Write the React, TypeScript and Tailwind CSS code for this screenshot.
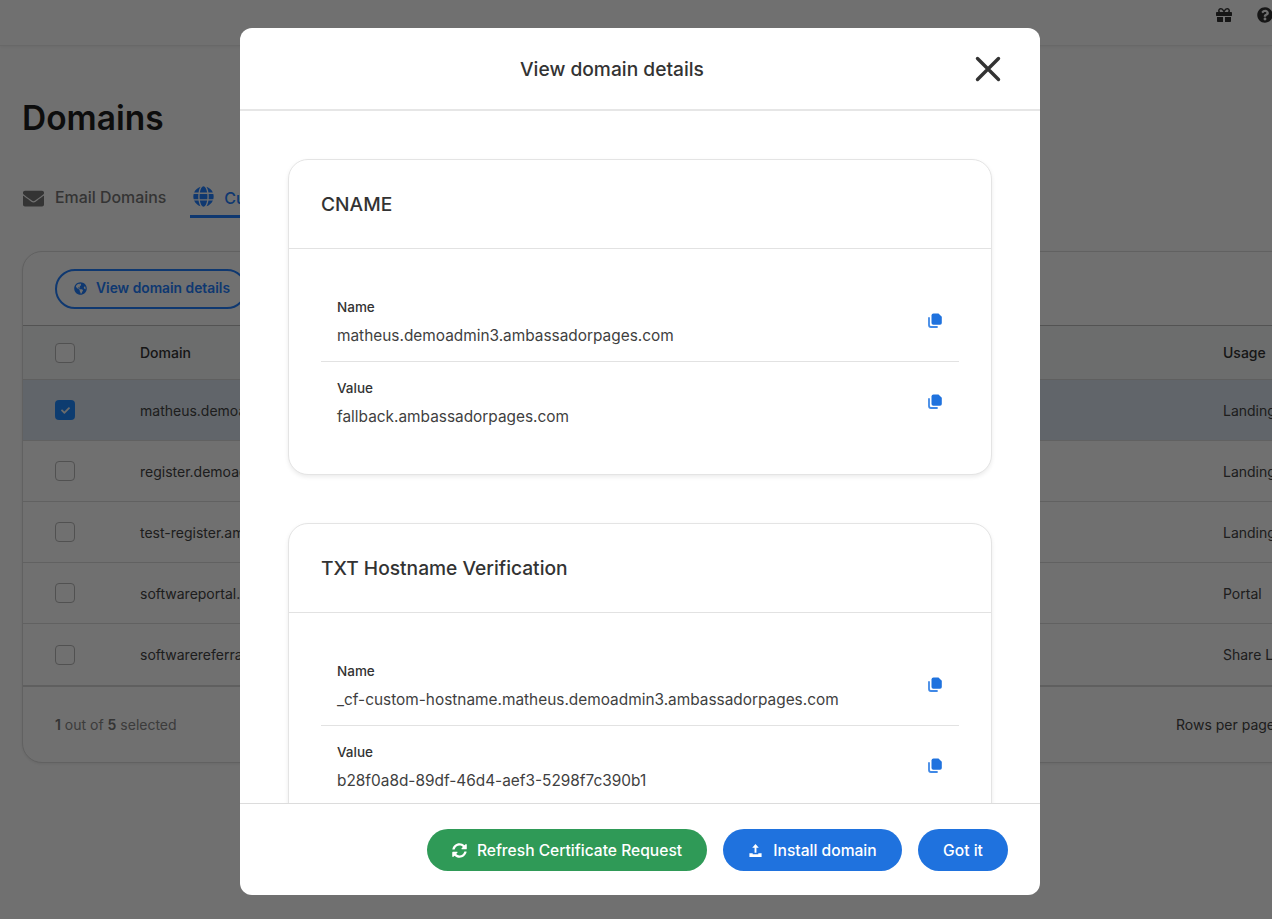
import React from "react";
import { FaEnvelope, FaGlobeAmericas, FaGlobe, FaGift, FaQuestionCircle, FaSyncAlt, FaCheck } from "react-icons/fa";

const rows = [
  ["matheus.demoadmin3.ambassadorpages.com", "Landing Pages", true],
  ["register.demoadmin3.ambassadorpages.com", "Landing Pages", false],
  ["test-register.ambassadorpages.com", "Landing Pages", false],
  ["softwareportal.zoomifier.com", "Portal", false],
  ["softwarereferrals.zoomifier.com", "Share Links", false],
] as const;

function Box({ on }: { on?: boolean }) {
  return on ? (
    <span className="flex h-5 w-5 items-center justify-center rounded-[4px] bg-[#1e8aff] text-[#f4f4f4]">
      <FaCheck className="h-[9px] w-[9px]" />
    </span>
  ) : (
    <span className="block h-5 w-5 rounded-[4px] border border-[#b8b8b8] bg-white" />
  );
}

function CopyIcon() {
  return (
    <svg className="-mt-[2px] h-[15px] w-[14px]" viewBox="0 0 14 15" fill="none">
      <path d="M1 5 V12 Q1 14 3 14 H9" stroke="#3f88e6" strokeWidth="1.8" strokeLinecap="round" />
      <path d="M5.5 0.5 H10.5 L13.8 3.8 V10 Q13.8 11.8 12 11.8 H5.3 Q3.5 11.8 3.5 10 V2.5 Q3.5 0.5 5.5 0.5 Z" fill="#1f72de" />
    </svg>
  );
}

function Field({ label, value, divider }: { label: string; value: string; divider?: boolean }) {
  return (
    <div className={`flex h-[81px] items-center justify-between pl-4 pr-[17px] ${divider ? "border-b border-[#e2e2e2]" : ""}`}>
      <div className="flex flex-col">
        <span className="text-[13.5px] font-medium leading-5 text-[#333]">{label}</span>
        <span className="mt-[9px] text-[15.4px] leading-5 text-[#3f3f3f]">{value}</span>
      </div>
      <CopyIcon />
    </div>
  );
}

function DetailCard({ title, name, value }: { title: string; name: string; value: string }) {
  return (
    <section className="shrink-0 rounded-[20px] border border-[#e4e4e4] bg-white shadow-[0_2px_4px_rgba(0,0,0,0.08)]">
      <div className="flex h-[89px] items-center border-b border-[#e2e2e2] px-8">
        <h3 className="text-[19.2px] font-medium text-[#333]">{title}</h3>
      </div>
      <div className="px-8 pb-[31px] pt-[32px]">
        <Field label="Name" value={name} divider />
        <Field label="Value" value={value} />
      </div>
    </section>
  );
}

export default function App() {
  return (
    <div className="relative h-[919px] w-full overflow-hidden bg-white font-['Inter',sans-serif]">
      <header className="flex h-[46px] items-start justify-end gap-[25px] border-b border-[#ececec] pt-[7px] shadow-[0_1px_3px_rgba(0,0,0,0.06)]">
        <FaGift className="h-4 w-4 text-[#333]" />
        <FaQuestionCircle className="-mr-[1px] h-4 w-4 text-[#333]" />
      </header>

      <main className="pl-[22px]">
        <h1 className="mt-[49px] text-[33.5px] font-semibold leading-[46px] text-[#1f1f1f]">Domains</h1>
        <nav className="mt-[42px] flex h-[36px] items-start">
          <div className="flex items-center gap-[11px] pl-[1px] pt-[3px] text-[15.9px] font-medium leading-6 text-[#777]">
            <FaEnvelope className="h-[21px] w-[21px] text-[#777]" />
            Email Domains
          </div>
          <div className="ml-[24px] flex h-[35px] items-start gap-[10px] border-b-[3px] border-[#2480ff] pl-[3px] pr-3 pt-[3px] text-[16px] font-medium leading-6 text-[#2480ff]">
            <FaGlobe className="h-[21px] w-[21px]" />
            Custom Domains
          </div>
        </nav>

        <div className="mt-[32px] w-[1400px] rounded-[20px] border border-[#dcdcdc] bg-white shadow-[0_1px_3px_rgba(0,0,0,0.08)]">
          <div className="flex h-[74px] items-center border-b border-[#bdbdbd] pl-8">
            <div className="flex h-[40px] w-[192px] items-center gap-[9px] rounded-full border-2 border-[#2480ff] pl-[17px] text-[13.8px] font-semibold text-[#2480ff]">
              <FaGlobeAmericas className="h-[13px] w-[13px]" />
              View domain details
            </div>
          </div>
          <div className="flex h-[54px] items-center border-b border-[#d8d8d8] bg-[#f6f7f8] pl-8 text-[14px] font-medium text-[#333]">
            <Box />
            <span className="ml-[65px] w-[1083px]">Domain</span>
            <span>Usage</span>
          </div>
          {rows.map(([d, u, on], i) => (
            <div
              key={d}
              className={`flex h-[61px] items-center pl-8 text-[14px] text-[#444] ${i < 4 ? "border-b border-[#dedede]" : ""} ${on ? "bg-[#dde7f1]" : ""}`}
            >
              <Box on={on} />
              <span className="ml-[65px] w-[1083px]">{d}</span>
              <span>{u}</span>
            </div>
          ))}
          <div className="flex h-[77px] items-center border-t-2 border-[#d8d8d8] pl-8 text-[14px] text-[#888]">
            <span className="w-[1121px]">
              <b className="font-semibold text-[#777]">1</b> out of <b className="font-semibold text-[#777]">5</b> selected
            </span>
            <span className="text-[#444]">Rows per page</span>
          </div>
        </div>
      </main>

      <div className="absolute inset-0 bg-black/[0.56]" />

      <div className="absolute left-[240px] top-[28px] flex h-[867px] w-[800px] flex-col overflow-hidden rounded-[12px] bg-white">
        <div className="flex h-[83px] shrink-0 items-center justify-between border-b-2 border-[#e6e6e6] pl-[280px] pr-[39px]">
          <h2 className="pt-[2px] text-[19.2px] font-medium text-[#333]">View domain details</h2>
          <svg className="h-[26px] w-[26px]" viewBox="0 0 26 26" fill="none" stroke="#333" strokeWidth="3.4" strokeLinecap="round">
            <path d="M2.5 2.5 L23.5 23.5 M23.5 2.5 L2.5 23.5" />
          </svg>
        </div>
        <div className="flex min-h-0 flex-1 flex-col gap-[48px] overflow-hidden px-[48px] pt-[48px]">
          <DetailCard title="CNAME" name="matheus.demoadmin3.ambassadorpages.com" value="fallback.ambassadorpages.com" />
          <DetailCard
            title="TXT Hostname Verification"
            name="_cf-custom-hostname.matheus.demoadmin3.ambassadorpages.com"
            value="b28f0a8d-89df-46d4-aef3-5298f7c390b1"
          />
        </div>
        <div className="flex h-[92px] shrink-0 items-start justify-end gap-4 border-t border-[#dcdcdc] pr-8 pt-[25px] text-[15.6px] font-medium text-white">
          <button className="flex h-[42px] w-[280px] items-center justify-center gap-[10px] rounded-full bg-[#2f9a57] pt-[1px]">
            <FaSyncAlt className="h-[15px] w-[15px]" />
            Refresh Certificate Request
          </button>
          <button className="flex h-[42px] w-[179px] items-center justify-center gap-[10px] rounded-full bg-[#1f72de] pt-[1px]">
            <svg className="h-[15px] w-[15px]" viewBox="0 0 16 16" fill="currentColor">
              <path d="M8 1 L11.5 5 H9 V10.5 H7 V5 H4.5 Z" />
              <path d="M1.5 11 H5 V12 H11 V11 H14.5 V15 H1.5 Z" />
            </svg>
            Install domain
          </button>
          <button className="flex h-[42px] w-[90px] items-center justify-center rounded-full bg-[#1f72de] pt-[1px]">Got it</button>
        </div>
      </div>
    </div>
  );
}
